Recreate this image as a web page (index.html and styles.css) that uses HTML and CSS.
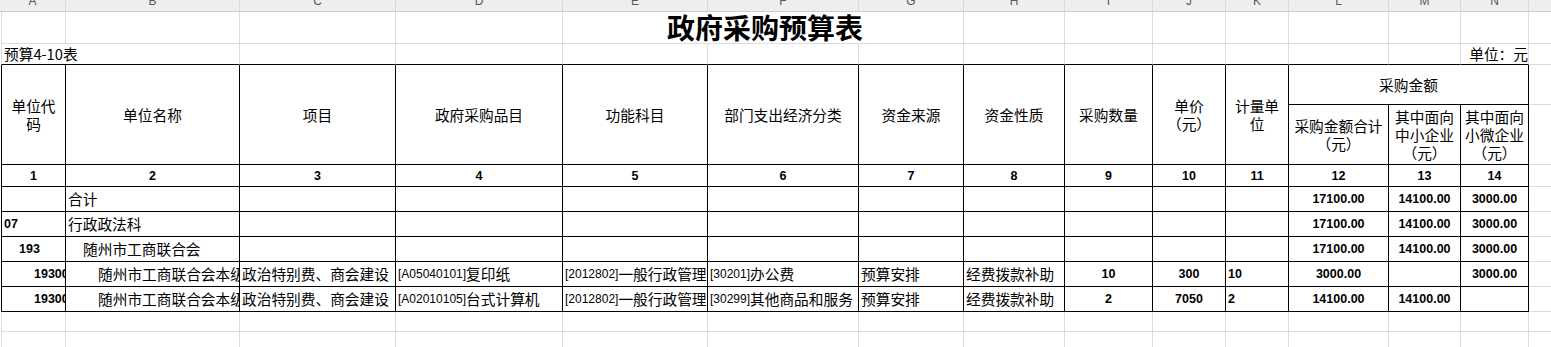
FILE: index.html
```html
<!DOCTYPE html>
<html lang="zh-CN">
<head>
<meta charset="utf-8">
<title>政府采购预算表</title>
<link rel="stylesheet" href="styles.css">
</head>
<body>
<div class="sheet">
  <!-- column letters -->
  <div class="h">A</div><div class="h">B</div><div class="h">C</div><div class="h">D</div><div class="h">E</div><div class="h">F</div><div class="h">G</div><div class="h">H</div><div class="h">I</div><div class="h">J</div><div class="h">K</div><div class="h">L</div><div class="h">M</div><div class="h">N</div><div class="h"></div>

  <!-- title row -->
  <div class="c a"></div><div class="c"></div><div class="c"></div><div class="c"></div>
  <div class="c s3 title">政府采购预算表</div>
  <div class="c"></div><div class="c"></div><div class="c"></div><div class="c"></div><div class="c"></div><div class="c"></div><div class="c"></div><div class="c"></div>

  <!-- row 2 -->
  <div class="c a s2 hb bot">预算4-10表</div>
  <div class="c hb"></div><div class="c hb"></div><div class="c hb"></div><div class="c hb"></div><div class="c hb"></div><div class="c hb"></div><div class="c hb"></div><div class="c hb"></div><div class="c hb"></div><div class="c hb"></div><div class="c hb"></div>
  <div class="c hb bot r">单位：元</div>
  <div class="c"></div>

  <!-- header -->
  <div class="c k a rs2 ctr wrap">单位代<br>码</div>
  <div class="c k rs2 ctr">单位名称</div>
  <div class="c k rs2 ctr">项目</div>
  <div class="c k rs2 ctr">政府采购品目</div>
  <div class="c k rs2 ctr">功能科目</div>
  <div class="c k rs2 ctr">部门支出经济分类</div>
  <div class="c k rs2 ctr">资金来源</div>
  <div class="c k rs2 ctr">资金性质</div>
  <div class="c k rs2 ctr">采购数量</div>
  <div class="c k rs2 ctr wrap">单价<br>（元）</div>
  <div class="c k rs2 ctr wrap">计量单<br>位</div>
  <div class="c k s3 ctr">采购金额</div>
  <div class="c"></div>
  <div class="c k ctr wrap">采购金额合计<br>（元）</div>
  <div class="c k ctr wrap">其中面向<br>中小企业<br>（元）</div>
  <div class="c k ctr wrap">其中面向<br>小微企业<br>（元）</div>
  <div class="c"></div>

  <!-- number row -->
  <div class="c k a ctr num">1</div><div class="c k ctr num">2</div><div class="c k ctr num">3</div><div class="c k ctr num">4</div><div class="c k ctr num">5</div><div class="c k ctr num">6</div><div class="c k ctr num">7</div><div class="c k ctr num">8</div><div class="c k ctr num">9</div><div class="c k ctr num">10</div><div class="c k ctr num">11</div><div class="c k ctr num">12</div><div class="c k ctr num">13</div><div class="c k ctr num">14</div><div class="c"></div>

  <!-- 合计 -->
  <div class="c k a num"></div><div class="c k">合计</div>
  <div class="c k"></div><div class="c k"></div><div class="c k"></div><div class="c k"></div><div class="c k"></div><div class="c k"></div><div class="c k"></div><div class="c k"></div><div class="c k"></div>
  <div class="c k ctr num">17100.00</div><div class="c k ctr num">14100.00</div><div class="c k ctr num">3000.00</div><div class="c"></div>

  <!-- 07 -->
  <div class="c k a num">07</div><div class="c k">行政政法科</div>
  <div class="c k"></div><div class="c k"></div><div class="c k"></div><div class="c k"></div><div class="c k"></div><div class="c k"></div><div class="c k"></div><div class="c k"></div><div class="c k"></div>
  <div class="c k ctr num">17100.00</div><div class="c k ctr num">14100.00</div><div class="c k ctr num">3000.00</div><div class="c"></div>

  <!-- 193 -->
  <div class="c k a num i1">193</div><div class="c k i1">随州市工商联合会</div>
  <div class="c k"></div><div class="c k"></div><div class="c k"></div><div class="c k"></div><div class="c k"></div><div class="c k"></div><div class="c k"></div><div class="c k"></div><div class="c k"></div>
  <div class="c k ctr num">17100.00</div><div class="c k ctr num">14100.00</div><div class="c k ctr num">3000.00</div><div class="c"></div>

  <!-- item 1 -->
  <div class="c k a num i2">193001</div><div class="c k i2">随州市工商联合会本级</div>
  <div class="c k">政治特别费、商会建设</div>
  <div class="c k"><span class="lat">[A05040101]</span>复印纸</div>
  <div class="c k"><span class="lat">[2012802]</span>一般行政管理</div>
  <div class="c k"><span class="lat">[30201]</span>办公费</div>
  <div class="c k">预算安排</div>
  <div class="c k">经费拨款补助</div>
  <div class="c k ctr num">10</div>
  <div class="c k ctr num">300</div>
  <div class="c k num">10</div>
  <div class="c k ctr num">3000.00</div><div class="c k"></div><div class="c k ctr num">3000.00</div><div class="c"></div>

  <!-- item 2 -->
  <div class="c k a num i2">193001</div><div class="c k i2">随州市工商联合会本级</div>
  <div class="c k">政治特别费、商会建设</div>
  <div class="c k"><span class="lat">[A02010105]</span>台式计算机</div>
  <div class="c k"><span class="lat">[2012802]</span>一般行政管理</div>
  <div class="c k"><span class="lat">[30299]</span>其他商品和服务</div>
  <div class="c k">预算安排</div>
  <div class="c k">经费拨款补助</div>
  <div class="c k ctr num">2</div>
  <div class="c k ctr num">7050</div>
  <div class="c k num">2</div>
  <div class="c k ctr num">14100.00</div><div class="c k ctr num">14100.00</div><div class="c k"></div><div class="c"></div>

  <!-- empty rows -->
  <div class="c a"></div><div class="c"></div><div class="c"></div><div class="c"></div><div class="c"></div><div class="c"></div><div class="c"></div><div class="c"></div><div class="c"></div><div class="c"></div><div class="c"></div><div class="c"></div><div class="c"></div><div class="c"></div><div class="c"></div>
  <div class="c a"></div><div class="c"></div><div class="c"></div><div class="c"></div><div class="c"></div><div class="c"></div><div class="c"></div><div class="c"></div><div class="c"></div><div class="c"></div><div class="c"></div><div class="c"></div><div class="c"></div><div class="c"></div><div class="c"></div>
</div>
</body>
</html>
```
FILE: styles.css
```css
html, body {
  margin: 0;
  padding: 0;
  background: #ffffff;
  overflow: hidden;
}

body {
  width: 1551px;
  height: 347px;
  font-family: "Noto Sans CJK SC", "Liberation Sans", sans-serif;
  color: #000;
}

.sheet {
  display: grid;
  grid-template-columns: 66px 174px 156px 167px 145px 151px 105px 101px 88px 73px 63px 100px 72px 68px 40px;
  grid-template-rows: 12px 32px 21px 40px 60px 22px 25px 25px 25px 25px 25px 20px 20px;
  width: 1569px;
}

/* column letter strip */
.h {
  background: #eeeeee;
  border-right: 1px solid #d9d9d9;
  border-bottom: 1px solid #cdcdcd;
  font-family: "Liberation Sans", sans-serif;
  font-size: 12px;
  line-height: 3px;
  color: #555a66;
  text-align: center;
  overflow: hidden;
}

/* generic cell */
.c {
  display: flex;
  align-items: center;
  min-width: 0;
  overflow: hidden;
  white-space: nowrap;
  border-right: 1px solid #dcdcdc;
  border-bottom: 1px solid #dcdcdc;
  padding-left: 2px;
  font-size: 14.7px;
  line-height: 18px;
}

/* first column: left edge line at x=1 */
.a {
  margin-left: 1px;
  border-left: 1px solid #dcdcdc;
}

/* table cells with black borders */
.k {
  border-right-color: #000;
  border-bottom-color: #000;
}
.a.k {
  border-left-color: #000;
}

/* row above table: black bottom edge */
.hb {
  border-bottom-color: #000;
}

.s2 { grid-column: span 2; }
.s3 { grid-column: span 3; }
.rs2 { grid-row: span 2; }

.ctr {
  justify-content: center;
  text-align: center;
  padding-left: 0;
}

.r {
  justify-content: flex-end;
  padding-right: 0;
}

.bot {
  align-items: flex-end;
  padding-bottom: 1px;
}

.wrap {
  white-space: normal;
}

.title {
  justify-content: center;
  align-items: flex-end;
  padding-left: 4px;
  padding-bottom: 0;
  font-size: 28px;
  font-weight: 700;
  line-height: 31px;
  overflow: visible;
}

.num {
  font-family: "Liberation Sans", sans-serif;
  font-weight: 700;
  font-size: 12.5px;
}

.lat {
  font-family: "Liberation Sans", sans-serif;
  font-size: 12px;
}

.i1 { padding-left: 17px; }
.i2 { padding-left: 32px; }
```
